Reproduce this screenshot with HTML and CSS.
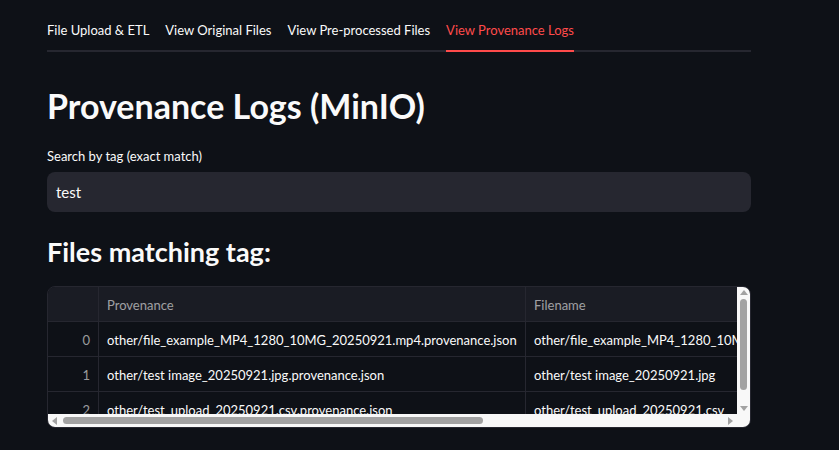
FILE: index.html
```html
<!DOCTYPE html>
<html lang="en">
<head>
<meta charset="utf-8">
<title>Provenance Logs</title>
<link rel="stylesheet" href="styles.css">
</head>
<body>
<main class="page">
  <nav class="tabs">
    <div class="tab">File Upload &amp; ETL</div>
    <div class="tab">View Original Files</div>
    <div class="tab">View Pre-processed Files</div>
    <div class="tab active">View Provenance Logs</div>
  </nav>

  <h1 class="title">Provenance Logs (MinIO)</h1>

  <label class="label" for="tag">Search by tag (exact match)</label>
  <div class="input"><span class="input-text">test</span></div>

  <h3 class="subtitle">Files matching tag:</h3>

  <div class="frame">
    <div class="viewport">
      <div class="grid">
        <div class="cell head idx"></div>
        <div class="cell head">Provenance</div>
        <div class="cell head">Filename</div>

        <div class="cell idx">0</div>
        <div class="cell">other/file_example_MP4_1280_10MG_20250921.mp4.provenance.json</div>
        <div class="cell">other/file_example_MP4_1280_10MG_20250921.mp4</div>

        <div class="cell idx">1</div>
        <div class="cell">other/test image_20250921.jpg.provenance.json</div>
        <div class="cell">other/test image_20250921.jpg</div>

        <div class="cell idx">2</div>
        <div class="cell">other/test_upload_20250921.csv.provenance.json</div>
        <div class="cell">other/test_upload_20250921.csv</div>
      </div>
    </div>
    <div class="vbar">
      <span class="arrow up"></span>
      <span class="vthumb"></span>
      <span class="arrow down"></span>
    </div>
    <div class="hbar">
      <span class="arrow left"></span>
      <span class="hthumb"></span>
      <span class="arrow right"></span>
    </div>
    <div class="corner"></div>
  </div>
</main>
</body>
</html>
```

FILE: styles.css
```css
html, body {
  margin: 0;
  padding: 0;
  background: #0e1117;
  color: #fafafa;
  font-family: Lato, "Source Sans Pro", "Open Sans", sans-serif;
}

.page {
  width: 704px;
  margin-left: 47px;
  padding-top: 9px;
  display: flex;
  flex-direction: column;
}

.tabs {
  display: flex;
  gap: 16px;
  height: 43px;
  box-shadow: inset 0 -2px 0 #262730;
}

.tab {
  font-size: 13px;
  line-height: 42px;
  height: 43px;
  color: #fafafa;
  box-sizing: border-box;
}

.tab.active {
  color: #ff4b4b;
  border-bottom: 2px solid #ff4b4b;
}

.title {
  margin: 32px 0 0 0;
  font-size: 34px;
  font-weight: 700;
  line-height: 44px;
  letter-spacing: 0;
}

.label {
  margin-top: 18px;
  font-size: 13px;
  line-height: 20px;
}

.input {
  margin-top: 6px;
  height: 40px;
  background: #262730;
  border-radius: 8px;
  display: flex;
  align-items: center;
  padding-left: 9px;
}

.input-text {
  font-size: 15px;
}

.subtitle {
  margin: 22px 0 0 0;
  font-size: 27px;
  font-weight: 700;
  line-height: 36px;
}

.frame {
  margin-top: 16px;
  height: 142px;
  border: 1px solid #262730;
  border-radius: 8px;
  overflow: hidden;
  box-sizing: border-box;
  display: grid;
  grid-template-columns: 1fr 13px;
  grid-template-rows: 1fr 13px;
}

.viewport {
  overflow: hidden;
  min-width: 0;
}

.grid {
  display: grid;
  grid-template-columns: 51px 427px 400px;
  grid-auto-rows: 35px;
}

.cell {
  font-size: 13px;
  line-height: 32px;
  padding: 2px 8px 0;
  white-space: nowrap;
  overflow: hidden;
  border-right: 1px solid #262730;
  border-bottom: 1px solid #262730;
  box-sizing: border-box;
}

.cell.head {
  background: #1a1c24;
  color: rgba(250, 250, 250, 0.6);
}

.cell.idx {
  text-align: right;
  color: rgba(250, 250, 250, 0.6);
}

.vbar {
  background: #f8f8f8;
  display: flex;
  flex-direction: column;
  align-items: center;
  padding: 3px 0;
}

.vthumb {
  flex: 1;
  width: 7px;
  margin: 4px 0 16px;
  background: #a2a2a2;
  border-radius: 4px;
}

.hbar {
  background: #f8f8f8;
  display: flex;
  align-items: center;
  padding: 0 4px;
}

.hthumb {
  width: 420px;
  height: 7px;
  margin-left: 6px;
  margin-right: auto;
  background: #a2a2a2;
  border-radius: 4px;
}

.corner {
  background: #f8f8f8;
}

.arrow {
  width: 0;
  height: 0;
  border: 4px solid transparent;
}

.arrow.up {
  border-bottom: 5px solid #a2a2a2;
  border-top-width: 0;
}

.arrow.down {
  border-top: 5px solid #a2a2a2;
  border-bottom-width: 0;
}

.arrow.left {
  border-right: 5px solid #a2a2a2;
  border-left-width: 0;
}

.arrow.right {
  border-left: 5px solid #a2a2a2;
  border-right-width: 0;
}
```
